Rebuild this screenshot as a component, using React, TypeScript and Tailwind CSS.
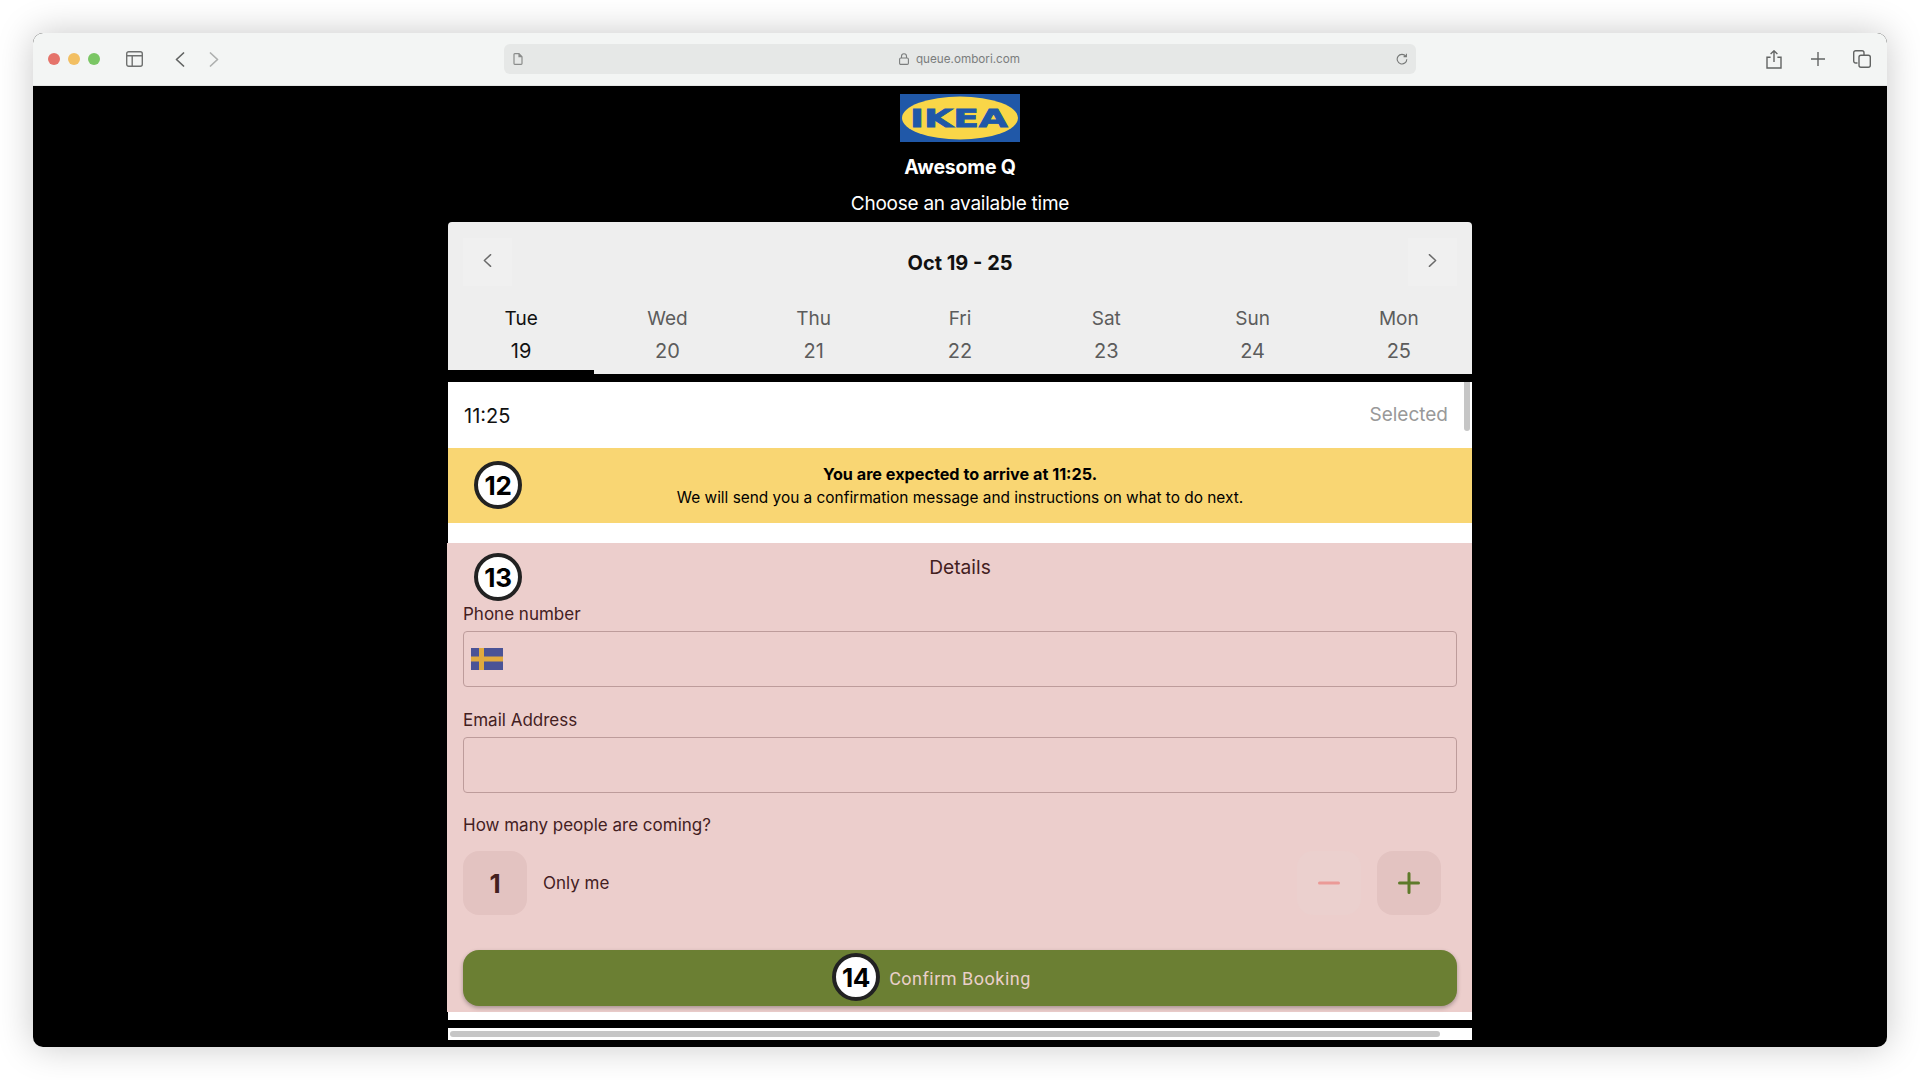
import React from "react";

const Badge = ({ n, className }: { n: string; className: string }) => (
  <div className={`absolute flex h-[48px] w-[48px] items-center justify-center rounded-full border-[4px] border-[#222] bg-white font-['Inter',sans-serif] text-[26px] font-bold tracking-[-0.3px] text-black ${className}`}>
    {n}
  </div>
);

const Chevron = ({ right, color, w = 10, h = 15, sw = 1.6 }: { right?: boolean; color: string; w?: number; h?: number; sw?: number }) => (
  <svg width={w} height={h} viewBox="0 0 10 15" fill="none" stroke={color} strokeWidth={sw} strokeLinecap="round" strokeLinejoin="round">
    <path d={right ? "M1.5 1 L8.5 7.5 L1.5 14" : "M8.5 1 L1.5 7.5 L8.5 14"} />
  </svg>
);

const days = [
  ["Tue", "19"],
  ["Wed", "20"],
  ["Thu", "21"],
  ["Fri", "22"],
  ["Sat", "23"],
  ["Sun", "24"],
  ["Mon", "25"],
];

export default function App() {
  return (
    <div className="h-[1080px] w-[1920px] overflow-hidden bg-white pl-[33px] pt-[33px] font-['Inter',sans-serif]">
      <div className="flex h-[1014px] w-[1854px] flex-col overflow-hidden rounded-[10px] bg-black shadow-[0_0_36px_rgba(0,0,0,0.22)]">
        {/* Toolbar */}
        <div className="flex h-[53px] shrink-0 items-center border-b border-[#e4e6e5] bg-[#f3f5f4] pl-[15px]">
          <div className="flex gap-[8px]">
            <span className="h-[12px] w-[12px] rounded-full bg-[#e5736a]" />
            <span className="h-[12px] w-[12px] rounded-full bg-[#f2bf62]" />
            <span className="h-[12px] w-[12px] rounded-full bg-[#7ac664]" />
          </div>
          <svg className="ml-[26px]" width="17" height="16" viewBox="0 0 17 16" fill="none" stroke="#6f7170" strokeWidth="1.4">
            <rect x="0.7" y="0.7" width="15.6" height="14.6" rx="2" />
            <path d="M0.7 4.8 H16.3 M6.2 4.8 V15.3" />
          </svg>
          <div className="ml-[32px]"><Chevron color="#626463" w={10} h={15} sw={1.7} /></div>
          <div className="ml-[24px]"><Chevron right color="#aeb0af" w={10} h={15} sw={1.7} /></div>
          <div className="ml-[285px] flex h-[30px] w-[912px] items-center rounded-[6px] bg-[#e6e8e7] pl-[9px] pr-[8px]">
            <svg width="10" height="12" viewBox="0 0 10 12" fill="none" stroke="#8a8c8b" strokeWidth="1.2">
              <path d="M1 1.5 Q1 0.7 1.8 0.7 H6 L9 3.7 V10.5 Q9 11.3 8.2 11.3 H1.8 Q1 11.3 1 10.5 Z M6 0.7 V3.7 H9" />
            </svg>
            <div className="flex flex-1 items-center justify-center gap-[7px] text-[11.7px] text-[#7b7d7d]">
              <svg width="10" height="12" viewBox="0 0 10 12" fill="none" stroke="#7b7d7d" strokeWidth="1.1">
                <rect x="0.6" y="5" width="8.8" height="6.4" rx="1.2" />
                <path d="M2.5 5 V3.2 A2.5 2.5 0 0 1 7.5 3.2 V5" />
              </svg>
              <span className="pt-[1px]">queue.ombori.com</span>
            </div>
            <svg width="12" height="12" viewBox="0 0 12 12" fill="none" stroke="#767877" strokeWidth="1.1">
              <path d="M9.8 3.2 A4.8 4.8 0 1 0 10.8 6.2 M10.4 0.8 V3.6 H7.6" />
            </svg>
          </div>
          <svg className="ml-[350px]" width="16" height="19" viewBox="0 0 16 19" fill="none" stroke="#626463" strokeWidth="1.4">
            <path d="M8 12 V1 M4.6 4 L8 0.8 L11.4 4 M4.6 7.2 H1 V18 H15 V7.2 H11.4" />
          </svg>
          <svg className="ml-[29px]" width="14" height="14" viewBox="0 0 14 14" fill="none" stroke="#626463" strokeWidth="1.4">
            <path d="M7 0 V14 M0 7 H14" />
          </svg>
          <svg className="ml-[28px]" width="18" height="18" viewBox="0 0 18 18" fill="none" stroke="#626463" strokeWidth="1.4">
            <path d="M4.5 13 H2.7 A2 2 0 0 1 0.7 11 V2.7 A2 2 0 0 1 2.7 0.7 H9 A2 2 0 0 1 11 2.7 V5" />
            <rect x="6" y="5.2" width="11.3" height="12.1" rx="2" />
          </svg>
        </div>

        {/* Page */}
        <div className="flex flex-col items-center">
          <svg className="mt-[8px]" width="120" height="48" viewBox="0 0 120 48">
            <rect width="120" height="48" fill="#2058a8" />
            <ellipse cx="60" cy="24" rx="58" ry="21.5" fill="#f9d648" />
            <text x="59" y="33" textAnchor="middle" textLength="98" lengthAdjust="spacingAndGlyphs" fontFamily="'DejaVu Sans', sans-serif" fontWeight="700" fontSize="25" fill="#2058a8" stroke="#2058a8" strokeWidth="0.8">IKEA</text>
          </svg>
          <div className="mt-[11px] text-[19.5px] font-bold leading-[28px] tracking-[-0.2px] text-white">Awesome Q</div>
          <div className="mt-[8px] pt-[1px] text-[19px] leading-[28px] tracking-[-0.25px] text-white">Choose an available time</div>

          <div className="mt-[4px] w-[1024px]">
            {/* Calendar header */}
            <div className="rounded-t-[4px] bg-[#eeeeee]">
              <div className="flex items-center justify-between px-[15px] pt-[16px]">
                <div className="flex h-[48px] w-[49px] items-center justify-center bg-[#f0f0f0] pb-[4px]"><Chevron color="#6a6a6a" w={9} h={15} /></div>
                <div className="pt-[1px] text-[20px] font-bold text-[#111]">Oct 19 - 25</div>
                <div className="flex h-[48px] w-[49px] items-center justify-center bg-[#f0f0f0] pb-[4px]"><Chevron right color="#6a6a6a" w={9} h={15} /></div>
              </div>
              <div className="grid grid-cols-7">
                {days.map(([d, n], i) => (
                  <div key={d} className={`flex h-[88px] flex-col items-center pt-[17px] leading-[32px] ${i === 0 ? "border-b-[4px] border-black text-[#111]" : "text-[#5c5c5c]"}`}>
                    <span className="text-[19px]">{d}</span>
                    <span className="text-[20px]">{n}</span>
                  </div>
                ))}
              </div>
            </div>

            {/* Scroll area */}
            <div className="relative mt-[8px] h-[638px] bg-white">
              <div className="absolute right-[2px] top-0 h-[49px] w-[6px] rounded-b-[3px] bg-[#c6c6c6]" />
              <div className="flex h-[66px] items-center justify-between px-[16px] pr-[24px] pt-[1px]">
                <span className="text-[20px] text-[#111]">11:25</span>
                <span className="text-[19px] text-[#999999]">Selected</span>
              </div>
              <div className="relative flex h-[75px] flex-col items-center justify-center bg-[#f9d673] text-[15.4px] leading-[23px] text-black">
                <Badge n="12" className="left-[26px] top-[13px]" />
                <span className="text-[16.2px] font-bold">You are expected to arrive at 11:25.</span>
                <span>We will send you a confirmation message and instructions on what to do next.</span>
              </div>

              <div className="relative -ml-px mt-[20px] h-[469px] bg-[#eccecc] pl-[16px] pr-[15px] text-[#43201f]">
                <Badge n="13" className="left-[27px] top-[10px]" />
                <div className="pt-[10px] text-center text-[19.2px] leading-[28px]">Details</div>
                <div className="mt-[20px] text-[17px] leading-[27px]">Phone number</div>
                <div className="mt-[3px] flex h-[56px] items-center rounded-[4px] border border-[#bd9c9b] pl-[7px]">
                  <svg width="32" height="22" viewBox="0 0 32 22">
                    <rect width="32" height="22" fill="#4a5396" />
                    <rect x="8" width="5" height="22" fill="#e0aa3e" />
                    <rect y="8.5" width="32" height="5" fill="#e0aa3e" />
                  </svg>
                </div>
                <div className="mt-[20px] text-[17px] leading-[27px]">Email Address</div>
                <div className="mt-[3px] h-[56px] rounded-[4px] border border-[#bd9c9b]" />
                <div className="mt-[19px] text-[17px] leading-[27px]">How many people are coming?</div>
                <div className="mt-[12px] flex items-center">
                  <div className="flex h-[64px] w-[64px] items-center justify-center rounded-[16px] bg-[#e3c3c1] text-[26px] font-bold">1</div>
                  <span className="ml-[16px] flex-1 pt-[2px] text-[17px]">Only me</span>
                  <div className="flex h-[64px] w-[64px] items-center justify-center rounded-[16px] bg-[#ebd0ce]">
                    <svg width="22" height="4" viewBox="0 0 22 4"><path d="M1.5 2 H20.5" stroke="#eb9a97" strokeWidth="3" strokeLinecap="round" /></svg>
                  </div>
                  <div className="ml-[16px] mr-[16px] flex h-[64px] w-[64px] items-center justify-center rounded-[16px] bg-[#e3c3c1]">
                    <svg width="22" height="22" viewBox="0 0 22 22"><path d="M1.5 11 H20.5 M11 1.5 V20.5" stroke="#5e7a2a" strokeWidth="3" strokeLinecap="round" /></svg>
                  </div>
                </div>
                <div className="relative mt-[35px] flex h-[56px] items-center justify-center rounded-[16px] bg-[#6b7f33] font-['Roboto',sans-serif] text-[18px] tracking-[0.5px] text-[#e9cfc9] shadow-[0_2px_4px_rgba(0,0,0,0.3)]">
                  Confirm Booking
                  <Badge n="14" className="left-[369px] top-[3px]" />
                </div>
              </div>
            </div>

            {/* Horizontal scrollbar */}
            <div className="mt-[8px] flex h-[12px] items-center bg-white pl-[2px]">
              <div className="h-[6px] w-[990px] rounded-[3px] bg-[#c6c6c6]" />
            </div>
          </div>
        </div>
      </div>
    </div>
  );
}
